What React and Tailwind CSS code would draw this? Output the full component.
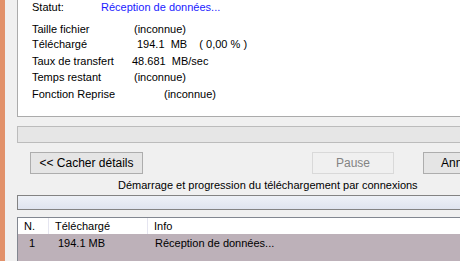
export default function App() {
  const font = { fontFamily: '"Liberation Sans", Arial, sans-serif' };
  return (
    <div className="w-[460px] h-[261px] overflow-hidden flex bg-[#f0f0f0] text-[11px] text-black" style={font}>
      <div className="w-[5px] h-full bg-[#e2916a] shrink-0" />
      <div className="flex-1 flex flex-col pl-[12px]">
        {/* top white panel */}
        <div className="h-[117px] bg-white border-l border-b border-[#ababab] relative">
          <div className="absolute left-[14px] top-0 leading-[14px]">Statut:</div>
          <div className="absolute left-[83px] top-0 leading-[14px] text-[#1a1aff]">Réception de données...</div>
          <div className="absolute left-[14px] top-[22px] leading-[14px]">Taille fichier</div>
          <div className="absolute left-[116px] top-[22px] leading-[14px]">(inconnue)</div>
          <div className="absolute left-[14px] top-[37px] leading-[14px]">Téléchargé</div>
          <div className="absolute left-[119px] top-[37px] leading-[14px] whitespace-pre">194.1  MB    ( 0,00 % )</div>
          <div className="absolute left-[14px] top-[54px] leading-[14px]">Taux de transfert</div>
          <div className="absolute left-[114px] top-[54px] leading-[14px] whitespace-pre">48.681  MB/sec</div>
          <div className="absolute left-[14px] top-[70px] leading-[14px]">Temps restant</div>
          <div className="absolute left-[116px] top-[70px] leading-[14px]">(inconnue)</div>
          <div className="absolute left-[14px] top-[87px] leading-[14px]">Fonction Reprise</div>
          <div className="absolute left-[146px] top-[87px] leading-[14px]">(inconnue)</div>
        </div>
        {/* progress bar */}
        <div className="mt-[9px] h-[17px] bg-[#e6e6e6] border border-r-0 border-[#bcbcbc]" />
        {/* buttons */}
        <div className="mt-[9px] h-[22px] flex text-[12px]">
          <div className="ml-[13px] w-[113px] h-[22px] border border-[#adadad] bg-[#e5e5e5] flex items-center justify-center">
            &lt;&lt; Cacher détails
          </div>
          <div className="ml-[169px] w-[82px] h-[22px] border border-[#d9d9d9] bg-[#f0f0f0] text-[#838383] flex items-center justify-center">
            Pause
          </div>
          <div className="ml-[29px] w-[80px] h-[22px] border border-[#adadad] bg-[#e5e5e5] flex items-center pl-[17px] shrink-0">
            Annuler
          </div>
        </div>
        <div className="mt-[3px] h-[17px] text-[11px] leading-[17px] pl-[101px] whitespace-nowrap">
          Démarrage et progression du téléchargement par connexions
        </div>
        {/* second bar */}
        <div className="mt-[1px] h-[15px] border border-r-0 border-[#838383] bg-gradient-to-b from-[#eef1f7] to-[#dfe4ef]" />
        {/* table */}
        <div className="mt-[7px] flex-1 border-l border-t border-[#828790] bg-white flex flex-col">
          <div className="h-[16px] flex bg-white">
            <div className="w-[31px] border-r border-[#e5e5f0] pl-[6px] leading-[16px]">N.</div>
            <div className="w-[99px] border-r border-[#e5e5f0] pl-[6px] leading-[16px]">Téléchargé</div>
            <div className="flex-1 pl-[6px] leading-[16px]">Info</div>
          </div>
          <div className="flex-1 bg-[#bdb1b9] flex">
            <div className="w-[31px] pl-[11px] leading-[18px]">1</div>
            <div className="w-[99px] pl-[9px] leading-[18px]">194.1 MB</div>
            <div className="flex-1 pl-[7px] leading-[18px]">Réception de données...</div>
          </div>
        </div>
      </div>
    </div>
  );
}
